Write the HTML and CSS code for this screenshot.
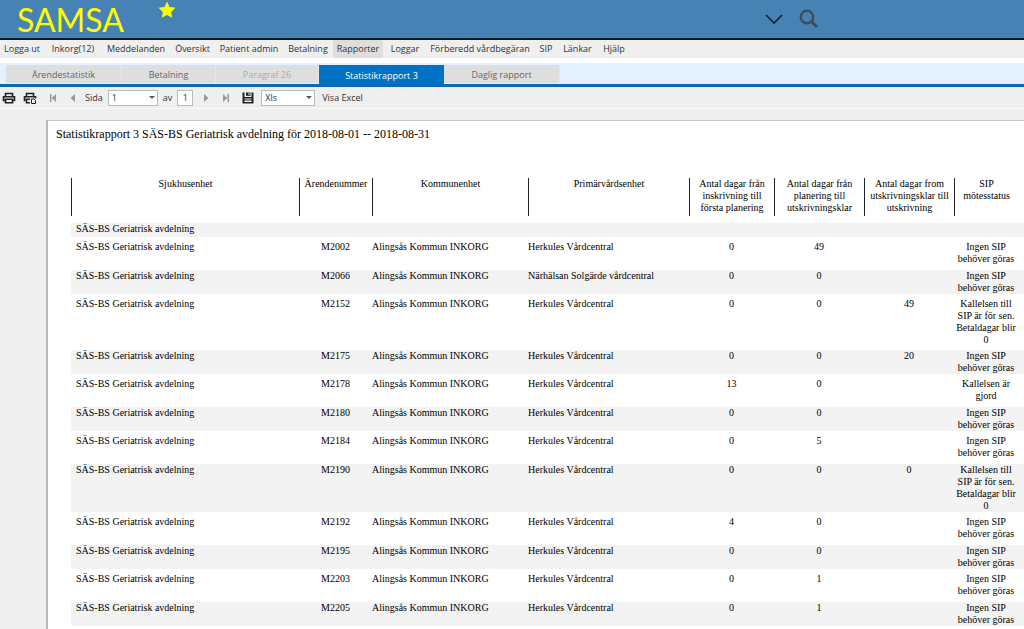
FILE: index.html
```
<!DOCTYPE html>
<html lang="sv">
<head>
<meta charset="utf-8">
<title>SAMSA</title>
<link rel="stylesheet" href="styles.css">
</head>
<body>
<header class="banner">
  <div class="brand">SAMSA</div>
  <svg class="star" viewBox="0 0 20 20" aria-hidden="true"><path d="M10 1.600l2.500 5.500 6 .7-4.400 4.100 1.100 5.900-5.200-2.900-5.200 2.900 1.100-5.900L1.500 7.800l6-.7z"/></svg>
  <div class="banner-tools">
    <button type="button" aria-label="Visa mer"><svg class="chevron" viewBox="0 0 18 11"><path d="M1 1l8 8 8-8"/></svg></button>
    <button type="button" aria-label="Sök"><svg class="search" viewBox="0 0 20 20"><circle cx="8" cy="8" r="6.200"/><path class="handle" d="M12.500 12.500l5.500 5.500"/></svg></button>
  </div>
</header>
<nav class="menu">
  <a href="#">Logga ut</a><a href="#">Inkorg(12)</a><a href="#">Meddelanden</a><a href="#">Översikt</a><a href="#">Patient admin</a><a href="#">Betalning</a><a href="#" class="current">Rapporter</a><a href="#">Loggar</a><a href="#">Förberedd vårdbegäran</a><a href="#">SIP</a><a href="#">Länkar</a><a href="#">Hjälp</a>
</nav>
<div class="tabs">
  <button type="button" class="tab tab-wide">Ärendestatistik</button>
  <button type="button" class="tab tab-narrow">Betalning</button>
  <button type="button" class="tab tab-mid" disabled>Paragraf 26</button>
  <button type="button" class="tab tab-active">Statistikrapport 3</button>
  <button type="button" class="tab tab-wide">Daglig rapport</button>
</div>
<div class="toolbar">
  <div class="tool-group prints">
    <button type="button" aria-label="Skriv ut"><svg class="icon" viewBox="0 0 14 12"><path class="line" d="M3.500 4V1.500h7V4M3 8.500H1.500V4.700h11v3.800H11M3.500 7.200h7v3.500h-7z"/></svg></button>
    <button type="button" aria-label="Skriv ut sida"><svg class="icon" viewBox="0 0 14 12"><path class="line" d="M3.500 4V1.500h7V4M2.500 8.500h-1V4.700h11V6.500M7 7.200H3.500v3.500H7"/><path class="line thin" d="M8.500 7h2.500l1.500 1.500v3h-4z"/></svg></button>
  </div>
  <div class="tool-group pager">
    <button type="button" aria-label="Första sidan"><svg class="nav" viewBox="0 0 8 10"><path d="M1 1h1.500v8H1zM7 1v8L2.800 5z"/></svg></button>
    <button type="button" aria-label="Föregående sida"><svg class="nav" viewBox="0 0 8 10"><path d="M6 1v8L1.500 5z"/></svg></button>
    <label for="page">Sida</label>
    <span class="combo combo-page"><select id="page"><option>1</option></select><i></i></span>
    <label for="total">av</label>
    <input id="total" class="total" value="1" readonly>
    <button type="button" aria-label="Nästa sida"><svg class="nav" viewBox="0 0 8 10"><path d="M2 1v8l4.500-4z"/></svg></button>
    <button type="button" aria-label="Sista sidan"><svg class="nav" viewBox="0 0 8 10"><path d="M7 1H5.500v8H7zM1 1v8l4.200-4z"/></svg></button>
  </div>
  <div class="tool-group export">
    <button type="button" aria-label="Spara"><svg class="save" viewBox="0 0 12 12"><path d="M.5.5h2V5h7V.5h2v11H.5z"/><path d="M4 .5h4.500v3.300H4z"/><path class="paper" d="M6.500 1h1v2h-1zM2.500 6.500h7v1h-7zM2.500 8.500h7V10h-7z"/></svg></button>
    <span class="combo combo-format"><select aria-label="Format"><option>Xls</option></select><i></i></span>
    <button type="button" class="text-button">Visa Excel</button>
  </div>
</div>
<main class="viewer">
  <section class="sheet">
    <h1>Statistikrapport 3 SÄS-BS Geriatrisk avdelning för 2018-08-01 -- 2018-08-31</h1>
    <table class="report">
      <colgroup><col class="c-hospital"><col class="c-number"><col class="c-municipality"><col class="c-care"><col class="c-first"><col class="c-days"><col class="c-days"><col></colgroup>
      <thead>
        <tr><th>Sjukhusenhet</th><th>Ärendenummer</th><th>Kommunenhet</th><th>Primärvårdsenhet</th><th>Antal dagar från inskrivning till första planering</th><th>Antal dagar från planering till utskrivningsklar</th><th>Antal dagar from utskrivningsklar till utskrivning</th><th>SIP<br>mötesstatus</th></tr>
      </thead>
      <tbody>
        <tr class="group"><td colspan="8">SÄS-BS Geriatrisk avdelning</td></tr>
        <tr><td>SÄS-BS Geriatrisk avdelning</td><td>M2002</td><td>Alingsås Kommun INKORG</td><td>Herkules Vårdcentral</td><td>0</td><td>49</td><td></td><td>Ingen SIP behöver göras</td></tr>
        <tr><td>SÄS-BS Geriatrisk avdelning</td><td>M2066</td><td>Alingsås Kommun INKORG</td><td>Närhälsan Solgärde vårdcentral</td><td>0</td><td>0</td><td></td><td>Ingen SIP behöver göras</td></tr>
        <tr><td>SÄS-BS Geriatrisk avdelning</td><td>M2152</td><td>Alingsås Kommun INKORG</td><td>Herkules Vårdcentral</td><td>0</td><td>0</td><td>49</td><td>Kallelsen till SIP är för sen. Betaldagar blir 0</td></tr>
        <tr><td>SÄS-BS Geriatrisk avdelning</td><td>M2175</td><td>Alingsås Kommun INKORG</td><td>Herkules Vårdcentral</td><td>0</td><td>0</td><td>20</td><td>Ingen SIP behöver göras</td></tr>
        <tr><td>SÄS-BS Geriatrisk avdelning</td><td>M2178</td><td>Alingsås Kommun INKORG</td><td>Herkules Vårdcentral</td><td>13</td><td>0</td><td></td><td>Kallelsen är gjord</td></tr>
        <tr><td>SÄS-BS Geriatrisk avdelning</td><td>M2180</td><td>Alingsås Kommun INKORG</td><td>Herkules Vårdcentral</td><td>0</td><td>0</td><td></td><td>Ingen SIP behöver göras</td></tr>
        <tr><td>SÄS-BS Geriatrisk avdelning</td><td>M2184</td><td>Alingsås Kommun INKORG</td><td>Herkules Vårdcentral</td><td>0</td><td>5</td><td></td><td>Ingen SIP behöver göras</td></tr>
        <tr><td>SÄS-BS Geriatrisk avdelning</td><td>M2190</td><td>Alingsås Kommun INKORG</td><td>Herkules Vårdcentral</td><td>0</td><td>0</td><td>0</td><td>Kallelsen till SIP är för sen. Betaldagar blir 0</td></tr>
        <tr><td>SÄS-BS Geriatrisk avdelning</td><td>M2192</td><td>Alingsås Kommun INKORG</td><td>Herkules Vårdcentral</td><td>4</td><td>0</td><td></td><td>Ingen SIP behöver göras</td></tr>
        <tr><td>SÄS-BS Geriatrisk avdelning</td><td>M2195</td><td>Alingsås Kommun INKORG</td><td>Herkules Vårdcentral</td><td>0</td><td>0</td><td></td><td>Ingen SIP behöver göras</td></tr>
        <tr><td>SÄS-BS Geriatrisk avdelning</td><td>M2203</td><td>Alingsås Kommun INKORG</td><td>Herkules Vårdcentral</td><td>0</td><td>1</td><td></td><td>Ingen SIP behöver göras</td></tr>
        <tr><td>SÄS-BS Geriatrisk avdelning</td><td>M2205</td><td>Alingsås Kommun INKORG</td><td>Herkules Vårdcentral</td><td>0</td><td>1</td><td></td><td>Ingen SIP behöver göras</td></tr>
      </tbody>
    </table>
  </section>
</main>
</body>
</html>
```
FILE: styles.css
```
* { box-sizing: border-box; }
body {
  margin: 0;
  background: #fff;
  color: #333;
  font: 9px/12px "Open Sans", "Noto Sans", sans-serif;
}
button {
  display: flex;
  align-items: center;
  justify-content: center;
  padding: 0;
  border: 0;
  background: none;
  color: inherit;
  font: inherit;
}
.banner {
  display: flex;
  align-items: flex-start;
  height: 40px;
  padding-left: 17px;
  background: #4682b4;
  border-bottom: 2px solid #0c1a26;
}
.brand {
  width: 140px;
  color: #ff0;
  font-family: Lato, "Open Sans", sans-serif;
  font-size: 32px;
  line-height: 40px;
}
.star { width: 20px; height: 20px; fill: #ff0; }
.banner-tools {
  display: flex;
  align-items: center;
  gap: 16px;
  height: 38px;
  margin-left: auto;
  padding-right: 205px;
}
.chevron { width: 18px; height: 11px; fill: none; stroke: #0b2440; stroke-width: 1.6; }
.search { width: 20px; height: 20px; fill: none; stroke: #444b52; stroke-width: 2.4; }
.search .handle { stroke-width: 3; }
.menu {
  display: grid;
  grid-template-columns: 44px 58px 68px 45px 68px 50px 50px 44px 106px 26px 37px 36px;
  height: 18px;
  background: #efefef;
}
.menu a {
  color: #333;
  line-height: 18px;
  text-align: center;
  text-decoration: none;
  white-space: nowrap;
}
.menu a.current { background: #dedede; }
.tabs {
  display: flex;
  height: 24px;
  margin-top: 5px;
  padding: 2px 0 0 6px;
  background: #e4f0fe;
  border-bottom: 3px solid #0a68b8;
}
.tab {
  height: 18px;
  padding-top: 2px;
  background: #dedede;
  color: #666;
  border-right: 1px solid #e8e8e8;
}
.tab:disabled { color: #aaa; }
.tab-wide { width: 116px; }
.tab-narrow { width: 94px; }
.tab-mid { width: 103px; }
.tab-active {
  width: 125px;
  height: 19px;
  background: #0072c6;
  border: 0;
  color: #fff;
  font-weight: 500;
}
.toolbar {
  display: flex;
  align-items: center;
  height: 22px;
  background: #efefef;
  border-bottom: 1px solid #f8f8f8;
}
.tool-group { display: flex; align-items: center; }
.prints { gap: 7px; padding: 0 8px 0 2px; }
.pager { gap: 5px; }
.pager button { width: 15px; }
.icon { width: 14px; height: 12px; }
.line { fill: none; stroke: #222; stroke-width: 1.6; }
.thin { stroke-width: 1; }
.nav { width: 8px; height: 10px; fill: #999; }
.save { width: 12px; height: 12px; fill: #222; }
.save .paper { fill: #eee; }
.combo { display: grid; align-items: center; height: 16px; }
.combo select, .combo i { grid-area: 1 / 1; }
.combo select {
  width: 100%;
  height: 16px;
  padding: 0 3px;
  appearance: none;
  background: #fff;
  border: 1px solid #bbb;
  border-radius: 0;
  color: #333;
  font: inherit;
}
.combo i {
  justify-self: end;
  margin-right: 3px;
  border: 3px solid transparent;
  border-top-color: #555;
  border-bottom: 0;
  pointer-events: none;
}
.combo-page { width: 50px; }
.combo-format { width: 54px; }
.total {
  width: 16px;
  height: 16px;
  padding: 0;
  border: 1px solid #bbb;
  background: #fff;
  color: #333;
  font: inherit;
  text-align: center;
}
.export { gap: 7px; padding-left: 9px; }
.viewer {
  padding: 11px 0 0 46px;
  background: #efefef;
}
.sheet {
  padding: 6px 0 0 8px;
  background: #fff;
  border-top: 1px solid #c4c4c4;
  border-left: 2px solid #b8b8b8;
  color: #000;
  font-family: "Liberation Serif", serif;
}
.sheet h1 {
  margin: 0;
  font-size: 12px;
  font-weight: 400;
  line-height: 14px;
}
.report {
  width: calc(100% - 15px);
  margin: 37px 0 0 15px;
  border-spacing: 0;
  table-layout: fixed;
  font-size: 10px;
  line-height: 12px;
}
.c-hospital { width: 228px; }
.c-number { width: 73px; }
.c-municipality { width: 156px; }
.c-care { width: 161px; }
.c-first { width: 85px; }
.c-days { width: 90px; }
.report th {
  height: 38px;
  padding: 0 3px;
  border-left: 1px solid #222;
  font-weight: 400;
  text-align: center;
  vertical-align: top;
}
.report td {
  height: 28px;
  padding: 0;
  border-bottom: 4px solid #fff;
  text-align: center;
  vertical-align: top;
}
.report td:first-child { padding-left: 5px; text-align: left; }
.report td:nth-child(3), .report td:nth-child(4) { text-align: left; }
.report th:nth-child(8), .report td:nth-child(8) { padding: 0 6px 0 0; }
.report tbody tr:nth-child(odd) { background: #f3f3f3; }
.report tbody tr:nth-child(even) td { height: 29px; }
.report .group td { height: 25px; border-top: 7px solid #fff; }
```
